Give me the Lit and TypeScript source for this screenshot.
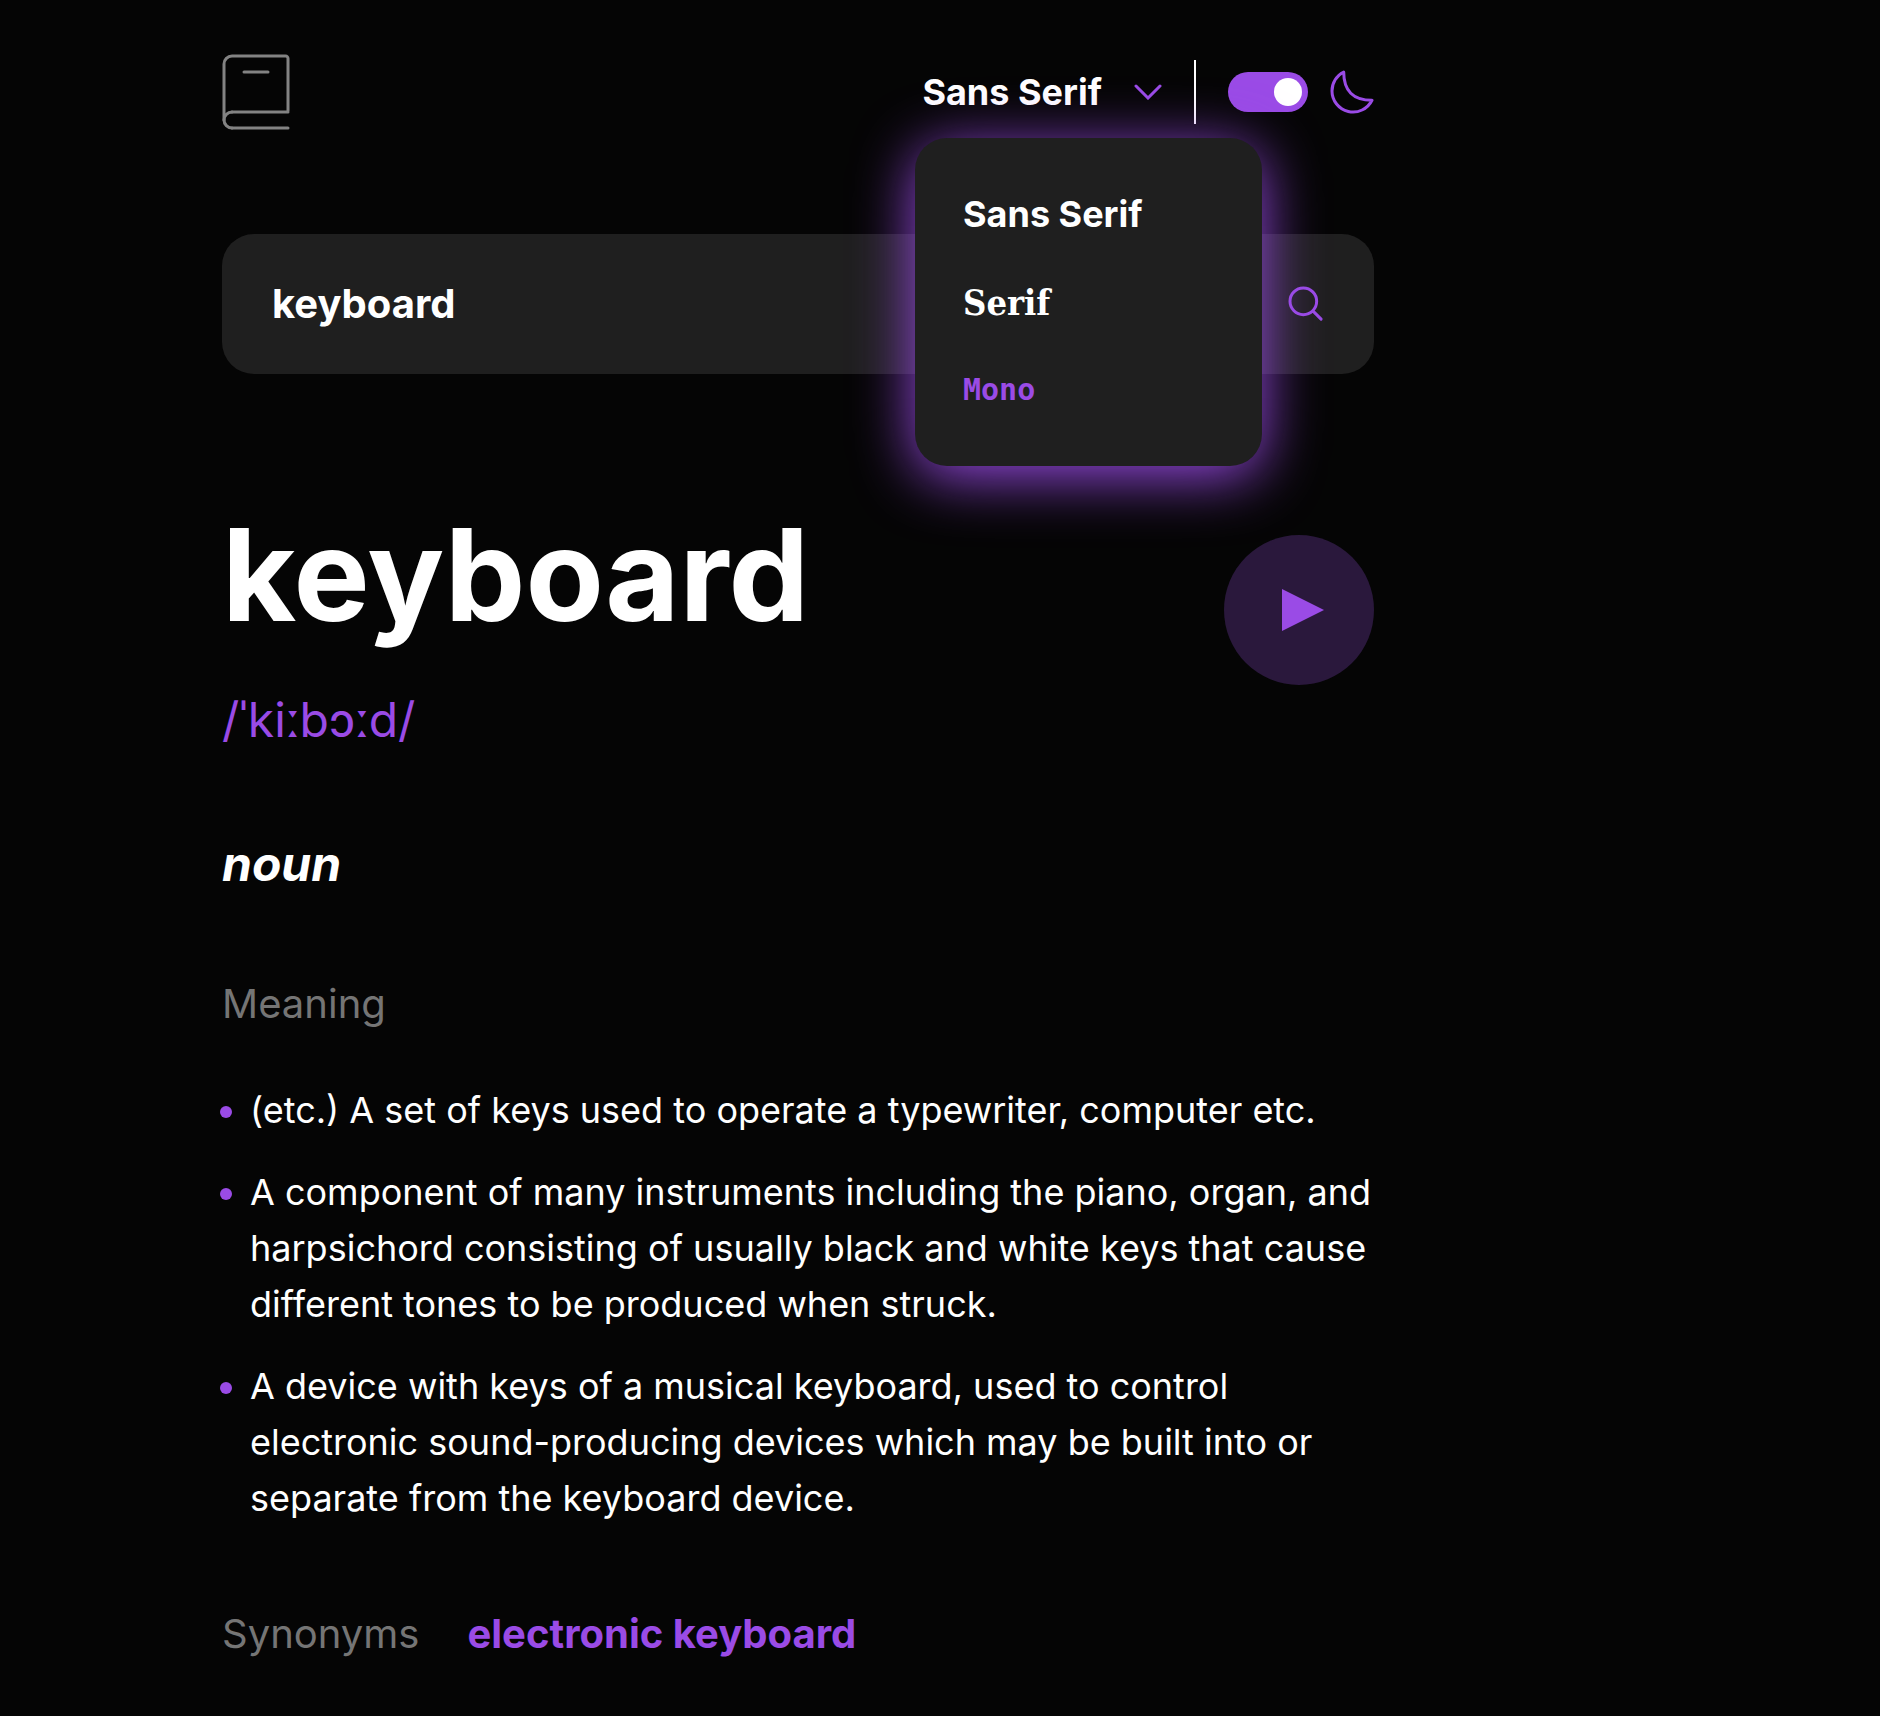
import { LitElement, html, css } from "lit";
import { customElement, property, state } from "lit/decorators.js";
import { classMap } from "lit/directives/class-map.js";

type FontKey = "sans" | "serif" | "mono";

const FONTS: { key: FontKey; label: string }[] = [
  { key: "sans", label: "Sans Serif" },
  { key: "serif", label: "Serif" },
  { key: "mono", label: "Mono" },
];

@customElement("font-picker")
class FontPicker extends LitElement {
  @property() selected: FontKey = "sans";
  @state() private open = true;
  @state() private highlighted: FontKey = "mono";

  static styles = css`
    :host {
      display: block;
      position: relative;
    }
    button {
      margin: 0;
      padding: 0;
      border: 0;
      background: none;
      color: #fff;
      font-family: Inter, sans-serif;
      font-size: 36px;
      font-weight: 700;
      line-height: 56px;
      text-align: left;
      cursor: pointer;
    }
    .trigger {
      display: flex;
      align-items: center;
      gap: 32px;
    }
    .chevron {
      width: 28px;
      height: 16px;
    }
    .menu {
      position: absolute;
      z-index: 2;
      top: 74px;
      right: -100px;
      box-sizing: border-box;
      width: 347px;
      padding: 48px;
      display: flex;
      flex-direction: column;
      gap: 32px;
      border-radius: 32px;
      background: #1f1f1f;
      box-shadow: 0 10px 60px #9a4be6;
    }
    .menu .serif {
      font-family: "DejaVu Serif Condensed", "DejaVu Serif", serif;
    }
    .menu .mono {
      font-family: "DejaVu Sans Mono", monospace;
      font-size: 30px;
    }
    .menu .highlighted {
      color: #9a4be6;
    }
  `;

  render() {
    const current = FONTS.find((f) => f.key === this.selected)!;
    return html`
      <button
        class="trigger"
        aria-haspopup="listbox"
        aria-expanded=${this.open}
        @click=${() => (this.open = !this.open)}
      >
        <span>${current.label}</span>
        <svg class="chevron" viewBox="0 0 14 8" aria-hidden="true">
          <path d="m1 1 6 6 6-6" fill="none" stroke="#9a4be6" stroke-width="1.5" stroke-linecap="round" />
        </svg>
      </button>
      ${this.open
        ? html`<div class="menu" role="listbox">
            ${FONTS.map(
              (f) => html`<button
                role="option"
                aria-selected=${f.key === this.selected}
                class=${classMap({ [f.key]: true, highlighted: f.key === this.highlighted })}
                @mouseenter=${() => (this.highlighted = f.key)}
                @click=${() => {
                  this.selected = f.key;
                  this.open = false;
                }}
              >${f.label}</button>`
            )}
          </div>`
        : null}
    `;
  }
}

@customElement("theme-switch")
class ThemeSwitch extends LitElement {
  static styles = css`
    label {
      display: flex;
      align-items: center;
      gap: 22px;
      cursor: pointer;
    }
    input {
      appearance: none;
      box-sizing: border-box;
      width: 80px;
      height: 40px;
      margin: 0;
      padding: 6px;
      display: flex;
      border-radius: 20px;
      background: #757575;
      cursor: pointer;
    }
    input::before {
      content: "";
      width: 28px;
      height: 28px;
      border-radius: 50%;
      background: #fff;
    }
    input:checked {
      justify-content: flex-end;
      background: #9a4be6;
    }
    svg {
      width: 44px;
      height: 44px;
    }
  `;

  render() {
    return html`<label>
      <input type="checkbox" role="switch" aria-label="Dark mode" checked />
      <svg viewBox="0 0 22 22" aria-hidden="true">
        <path
          fill="none"
          stroke="#9a4be6"
          stroke-width="1.5"
          stroke-linecap="round"
          stroke-linejoin="round"
          d="M1 10.449a10.544 10.544 0 0 0 19.993 4.686C11.544 15.135 6.858 10.448 6.858 1A10.545 10.545 0 0 0 1 10.449Z"
        />
      </svg>
    </label>`;
  }
}

@customElement("app-root")
class AppRoot extends LitElement {
  private meanings = [
    "(etc.) A set of keys used to operate a typewriter, computer etc.",
    "A component of many instruments including the piano, organ, and harpsichord consisting of usually black and white keys that cause different tones to be produced when struck.",
    "A device with keys of a musical keyboard, used to control electronic sound-producing devices which may be built into or separate from the keyboard device.",
  ];

  static styles = css`
    :host {
      display: block;
      box-sizing: border-box;
      min-height: 100vh;
      padding: 54px 48px 48px 222px;
      background: #050505;
      color: #fff;
      font-family: Inter, sans-serif;
    }
    .page {
      max-width: 1152px;
    }
    header,
    .tools,
    .search,
    .hero,
    .synonyms {
      display: flex;
    }
    header {
      align-items: center;
      justify-content: space-between;
    }
    .logo {
      display: block;
      width: 68px;
      height: 76px;
    }
    .tools {
      align-items: center;
      gap: 32px;
    }
    .divider {
      width: 2px;
      height: 64px;
      background: #fff;
    }
    .search {
      align-items: center;
      gap: 32px;
      height: 140px;
      margin-top: 104px;
      padding: 0 50px;
      box-sizing: border-box;
      border-radius: 32px;
      background: #1f1f1f;
    }
    .search input {
      flex: 1;
      min-width: 0;
      padding: 0;
      border: 0;
      outline: 0;
      background: none;
      color: #fff;
      font: 700 40px/48px Inter, sans-serif;
    }
    button {
      margin: 0;
      padding: 0;
      border: 0;
      background: none;
      cursor: pointer;
    }
    .search svg {
      display: block;
      width: 36px;
      height: 36px;
    }
    .hero {
      align-items: flex-start;
      justify-content: space-between;
      margin-top: 124px;
    }
    h1 {
      margin: 0;
      font-size: 128px;
      line-height: 154px;
      font-weight: 700;
    }
    .phonetic {
      margin: 39px 0 0;
      color: #9a4be6;
      font-size: 48px;
      line-height: 58px;
    }
    .length {
      font-family: "Noto Sans", sans-serif;
      font-weight: 700;
      line-height: 1;
    }
    .play {
      margin-top: 37px;
    }
    .play svg {
      display: block;
      width: 150px;
      height: 150px;
    }
    h2 {
      margin: 86px 0 0;
      font-size: 48px;
      line-height: 58px;
      font-weight: 700;
      font-style: italic;
    }
    h3 {
      margin: 0;
      color: #757575;
      font-size: 40px;
      line-height: 48px;
      font-weight: 400;
    }
    .meaning {
      margin-top: 87px;
    }
    ul {
      display: grid;
      gap: 26px;
      margin: 54px 0 0 -2px;
      padding: 0;
      list-style: none;
    }
    li {
      display: grid;
      grid-template-columns: 12px 1fr;
      gap: 18px;
      font-size: 36px;
      line-height: 56px;
    }
    li::before {
      content: "";
      height: 12px;
      margin-top: 24px;
      border-radius: 50%;
      background: #9a4be6;
    }
    .synonyms {
      gap: 48px;
      margin-top: 84px;
    }
    .synonyms a {
      color: #9a4be6;
      font-size: 40px;
      line-height: 48px;
      font-weight: 700;
      text-decoration: none;
    }
  `;

  render() {
    return html`
      <div class="page">
        <header>
          <svg class="logo" viewBox="0 0 34 38" role="img" aria-label="Dictionary">
            <g fill="none" stroke="#838383" stroke-width="1.5" stroke-linecap="round">
              <path d="M1 33V5a4 4 0 0 1 4-4h26.8A1.2 1.2 0 0 1 33 2.2v26.228M5 29h28M5 37h28" />
              <path stroke-linejoin="round" d="M5 37a4 4 0 1 1 0-8" />
              <path d="M11 9h12" />
            </g>
          </svg>
          <div class="tools">
            <font-picker></font-picker>
            <div class="divider"></div>
            <theme-switch></theme-switch>
          </div>
        </header>
        <form class="search" @submit=${(e: Event) => e.preventDefault()}>
          <input type="text" aria-label="Search word" value="keyboard" spellcheck="false" />
          <button type="submit" aria-label="Search">
            <svg viewBox="0 0 18 18" aria-hidden="true">
              <path
                fill="none"
                stroke="#9a4be6"
                stroke-width="1.5"
                stroke-linecap="round"
                stroke-linejoin="round"
                d="m12.663 12.663 3.887 3.887M1 7.664a6.665 6.665 0 1 0 13.33 0 6.665 6.665 0 0 0-13.33 0Z"
              />
            </svg>
          </button>
        </form>
        <main>
          <section class="hero">
            <div>
              <h1>keyboard</h1>
              <p class="phonetic">/ˈki<span class="length">ː</span>bɔ<span class="length">ː</span>d/</p>
            </div>
            <button class="play" aria-label="Play pronunciation">
              <svg viewBox="0 0 75 75" aria-hidden="true">
                <circle cx="37.5" cy="37.5" r="37.5" fill="#2a183c" />
                <path d="M29 27v21l21-10.5z" fill="#9a4be6" />
              </svg>
            </button>
          </section>
          <h2>noun</h2>
          <h3 class="meaning">Meaning</h3>
          <ul>
            ${this.meanings.map((m) => html`<li><span>${m}</span></li>`)}
          </ul>
          <div class="synonyms">
            <h3>Synonyms</h3>
            <a href="#electronic-keyboard">electronic keyboard</a>
          </div>
        </main>
      </div>
    `;
  }
}
